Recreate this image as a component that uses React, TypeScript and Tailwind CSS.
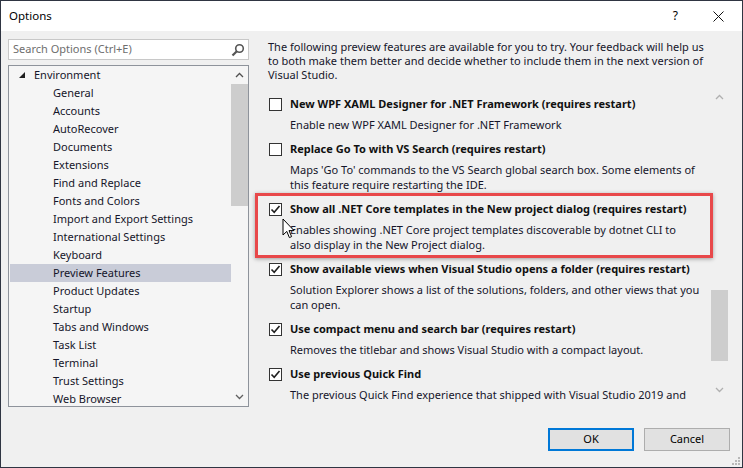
import React from 'react';

const treeItems = [
  'General',
  'Accounts',
  'AutoRecover',
  'Documents',
  'Extensions',
  'Find and Replace',
  'Fonts and Colors',
  'Import and Export Settings',
  'International Settings',
  'Keyboard',
  'Preview Features',
  'Product Updates',
  'Startup',
  'Tabs and Windows',
  'Task List',
  'Terminal',
  'Trust Settings',
  'Web Browser',
];

interface Feature {
  title: string;
  lines: string[];
  checked: boolean;
}

const features: Feature[] = [
  {
    title: 'New WPF XAML Designer for .NET Framework (requires restart)',
    lines: ['Enable new WPF XAML Designer for .NET Framework'],
    checked: false,
  },
  {
    title: 'Replace Go To with VS Search (requires restart)',
    lines: [
      "Maps 'Go To' commands to the VS Search global search box. Some elements of",
      'this feature require restarting the IDE.',
    ],
    checked: false,
  },
  {
    title: 'Show all .NET Core templates in the New project dialog (requires restart)',
    lines: [
      'Enables showing .NET Core project templates discoverable by dotnet CLI to',
      'also display in the New Project dialog.',
    ],
    checked: true,
  },
  {
    title: 'Show available views when Visual Studio opens a folder (requires restart)',
    lines: [
      'Solution Explorer shows a list of the solutions, folders, and other views that you',
      'can open.',
    ],
    checked: true,
  },
  {
    title: 'Use compact menu and search bar (requires restart)',
    lines: ['Removes the titlebar and shows Visual Studio with a compact layout.'],
    checked: true,
  },
  {
    title: 'Use previous Quick Find',
    lines: ['The previous Quick Find experience that shipped with Visual Studio 2019 and', 'earlier.'],
    checked: true,
  },
];

const Chevron = ({ up, color }: { up?: boolean; color: string }) => (
  <svg width="9" height="6" viewBox="0 0 9 6">
    <path
      d={up ? 'M1 5 L4.5 1.5 L8 5' : 'M1 1 L4.5 4.5 L8 1'}
      fill="none"
      stroke={color}
      strokeWidth="1.3"
    />
  </svg>
);

const CheckBox = ({ checked }: { checked: boolean }) => (
  <div className="w-[13px] h-[13px] border border-[#333333] bg-white flex items-center justify-center shrink-0">
    {checked && (
      <svg width="11" height="11" viewBox="0 0 11 11">
        <path d="M1.5 5.5 L4.2 8.3 L9.5 2" fill="none" stroke="#1f1f1f" strokeWidth="1.6" />
      </svg>
    )}
  </div>
);

export default function App() {
  return (
    <div
      className="relative w-[743px] h-[468px] border border-[#2f3542] flex flex-col bg-[#f0f0f0] text-[11px] text-[#15152a] overflow-hidden"
      style={{ fontFamily: '"Noto Sans", "Open Sans", sans-serif' }}
    >
      {/* Title bar */}
      <div className="h-[30px] bg-white flex items-center shrink-0">
        <span className="ml-[8px] text-[11.5px] text-black">Options</span>
        <span className="ml-auto mr-[35px] text-[12px] text-black">?</span>
        <svg width="11" height="11" viewBox="0 0 11 11" className="mr-[18px]">
          <path d="M0.5 0.5 L10.5 10.5 M10.5 0.5 L0.5 10.5" stroke="#111" strokeWidth="1" />
        </svg>
      </div>

      {/* Body */}
      <div className="flex h-[379px] pt-[8px] shrink-0">
        {/* Left column */}
        <div className="ml-[7px] w-[241px] flex flex-col">
          <div className="h-[21px] bg-white border border-[#c8c8c8] flex items-center pl-[4px] pr-[3px]">
            <span className="text-[#6e6e6e]">Search Options (Ctrl+E)</span>
            <svg width="14" height="14" viewBox="0 0 14 14" className="ml-auto">
              <circle cx="8.5" cy="5.5" r="3.8" fill="none" stroke="#555" strokeWidth="1.6" />
              <path d="M5.8 8.2 L1.5 12.5" stroke="#555" strokeWidth="2.2" />
            </svg>
          </div>
          <div className="mt-[5px] h-[342px] border border-[#8e939b] bg-[#f5f5f5] flex overflow-hidden">
            <div className="flex-1 flex flex-col pl-[1px]">
              <div className="h-[18px] flex items-center shrink-0">
                <svg width="7" height="7" viewBox="0 0 7 7" className="ml-[9px] mr-[8px]">
                  <polygon points="6,0 6,6 0,6" fill="#1e1e1e" />
                </svg>
                <span>Environment</span>
              </div>
              {treeItems.map((item) => (
                <div
                  key={item}
                  className={
                    item === 'Preview Features'
                      ? 'h-[18px] flex items-center shrink-0 pl-[43px] bg-[#c9ccd8]'
                      : 'h-[18px] flex items-center shrink-0 pl-[43px]'
                  }
                >
                  {item}
                </div>
              ))}
            </div>
            <div className="w-[17px] flex flex-col items-center shrink-0">
              <div className="h-[18px] flex items-center justify-center">
                <Chevron up color="#505050" />
              </div>
              <div className="w-[17px] h-[122px] bg-[#cdcdcd]" />
              <div className="mt-auto h-[18px] flex items-center justify-center">
                <Chevron color="#606060" />
              </div>
            </div>
          </div>
        </div>

        {/* Right pane */}
        <div className="ml-[19px] w-[460px] flex flex-col">
          <p className="mt-[1px] leading-[14px] whitespace-nowrap">
            The following preview features are available for you to try. Your feedback will help us
            <br />
            to both make them better and decide whether to include them in the next version of
            <br />
            Visual Studio.
          </p>
          <div className="mt-[6px] h-[318px] flex overflow-hidden">
            <div className="flex-1 pt-[6px] flex flex-col gap-[7px]">
              {features.map((f) => (
                <div key={f.title} className="flex flex-col">
                  <div className="h-[20px] flex items-center gap-[8px] pl-[1px]">
                    <CheckBox checked={f.checked} />
                    <span className="font-bold text-[#111] whitespace-nowrap">{f.title}</span>
                  </div>
                  <div className="mt-[3px] pl-[22px] leading-[15px] whitespace-nowrap">
                    {f.lines.map((l) => (
                      <div key={l}>{l}</div>
                    ))}
                  </div>
                </div>
              ))}
            </div>
            <div className="w-[17px] flex flex-col items-center shrink-0">
              <div className="h-[18px] flex items-center justify-center">
                <Chevron up color="#b0b0b0" />
              </div>
              <div className="mt-[184px] w-[17px] h-[71px] bg-[#cdcdcd]" />
              <div className="mt-[20px] h-[18px] flex items-center justify-center">
                <Chevron color="#b0b0b0" />
              </div>
            </div>
          </div>
        </div>
      </div>

      {/* Footer */}
      <div className="flex justify-end pt-[18px] pr-[12px] gap-[10px] shrink-0">
        <button className="w-[86px] h-[23px] bg-[#e1e1e1] border-2 border-[#0078d7] text-black">OK</button>
        <button className="w-[86px] h-[23px] bg-[#e1e1e1] border border-[#adadad] text-black">Cancel</button>
      </div>

      {/* Highlight rectangle */}
      <div className="absolute left-[254px] top-[192px] w-[458px] h-[65px] border-[3px] border-[#e8484a] shadow-[0_1px_4px_rgba(0,0,0,0.35)] pointer-events-none" />

      {/* Mouse cursor */}
      <svg className="absolute left-[281px] top-[217px]" width="14" height="22" viewBox="0 0 14 22">
        <path d="M1 1 L1 17 L4.8 13.4 L7.4 19.6 L9.6 18.6 L7 12.6 L12 12.6 Z" fill="#fff" stroke="#000" strokeWidth="1" />
      </svg>

      {/* Resize grip */}
      <div className="absolute right-[2px] bottom-[2px] grid grid-cols-3 gap-[1px]">
        {[0, 0, 1, 0, 1, 1, 1, 1, 1].map((v, i) => (
          <div key={i} className={v ? 'w-[2px] h-[2px] bg-[#b8b8b8]' : 'w-[2px] h-[2px]'} />
        ))}
      </div>
    </div>
  );
}
